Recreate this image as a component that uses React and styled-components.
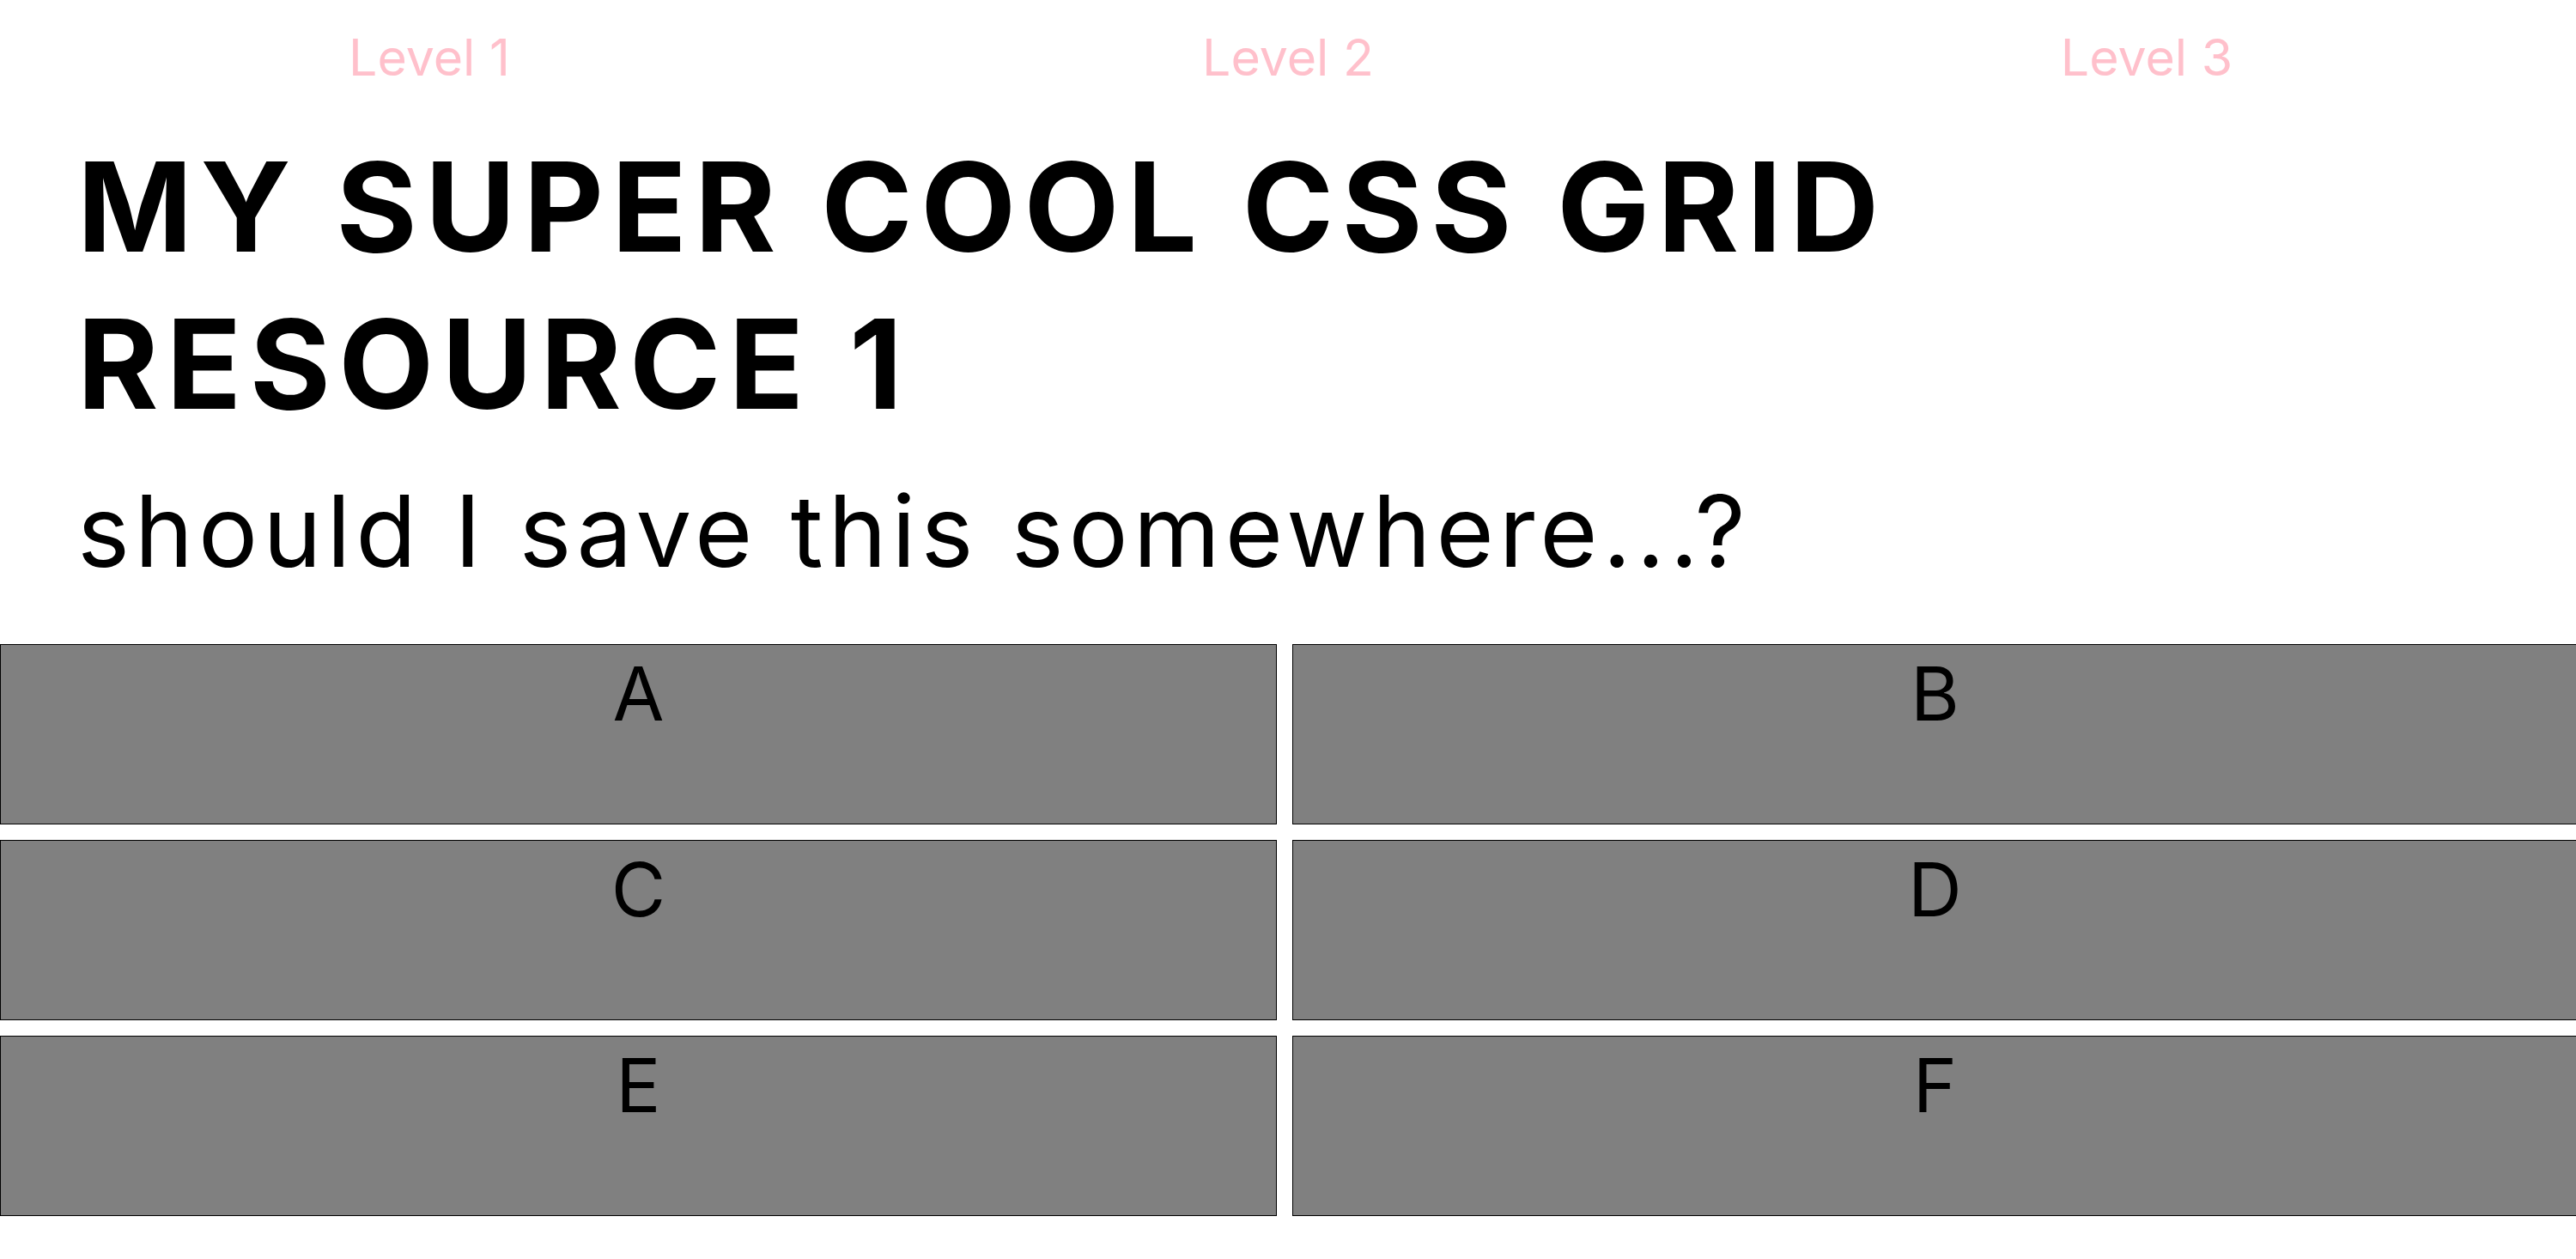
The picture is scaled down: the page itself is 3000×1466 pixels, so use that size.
import React from "react";
import styled, { createGlobalStyle } from "styled-components";

const Global = createGlobalStyle`
  html, body {
    margin: 0;
    padding: 0;
    background: #ffffff;
    overflow: hidden;
  }
  body {
    font-family: Inter, "Noto Sans", "DejaVu Sans", sans-serif;
    color: #000;
  }
`;

const Page = styled.div`
  width: 3000px;
  min-height: 1466px;
  display: flex;
  flex-direction: column;
`;

const Nav = styled.nav`
  display: grid;
  grid-template-columns: repeat(3, 1fr);
  padding-top: 27px;
`;

const NavItem = styled.a`
  text-align: center;
  color: pink;
  font-size: 59px;
  line-height: 80px;
  font-weight: 400;
  text-decoration: none;
`;

const Header = styled.header`
  padding-left: 90px;
  margin-top: 42px;
`;

const Title = styled.h1`
  margin: 0;
  max-width: 2600px;
  font-size: 144px;
  line-height: 183px;
  font-weight: 700;
  letter-spacing: 9.3px;
`;

const Subtitle = styled.p`
  margin: 33px 0 0;
  font-size: 115.5px;
  line-height: 140px;
  font-weight: 400;
  letter-spacing: 5.9px;
`;

const Grid = styled.section`
  margin-top: 62px;
  display: grid;
  grid-template-columns: 1487px 1497px;
  grid-auto-rows: 210px;
  column-gap: 18px;
  row-gap: 18px;
`;

const Cell = styled.div`
  box-sizing: border-box;
  background: grey;
  border: 1px solid #000;
  text-align: center;
  font-size: 87px;
  line-height: 113px;
  font-weight: 400;
`;

const levels = ["Level 1", "Level 2", "Level 3"];
const cells = ["A", "B", "C", "D", "E", "F"];

export default function App() {
  return (
    <Page>
      <Global />
      <Nav>
        {levels.map((l) => (
          <NavItem key={l}>{l}</NavItem>
        ))}
      </Nav>
      <Header>
        <Title>MY SUPER COOL CSS GRID RESOURCE 1</Title>
        <Subtitle>should I save this somewhere...?</Subtitle>
      </Header>
      <Grid>
        {cells.map((c) => (
          <Cell key={c}>{c}</Cell>
        ))}
      </Grid>
    </Page>
  );
}
